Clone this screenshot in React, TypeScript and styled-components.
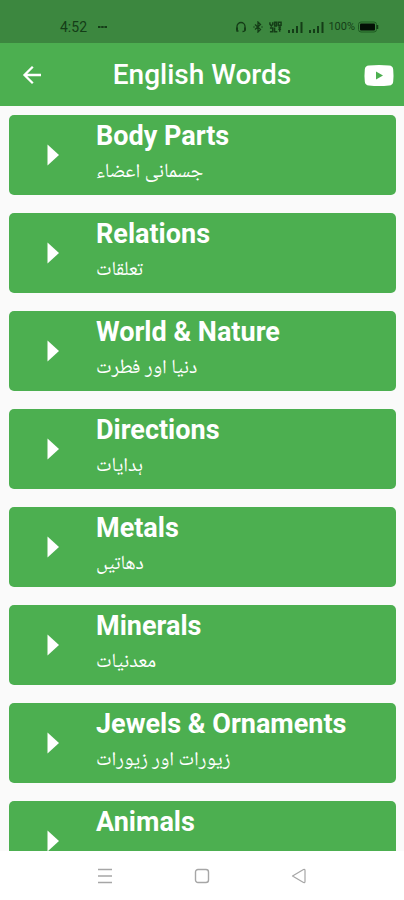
import React from 'react';
import styled, { createGlobalStyle } from 'styled-components';

const GlobalStyle = createGlobalStyle`
  * { box-sizing: border-box; }
  body { margin: 0; background: #fafafa; font-family: Roboto, "DejaVu Sans", sans-serif; }
`;

const Screen = styled.div`
  display: flex;
  flex-direction: column;
  height: 100vh;
  overflow: hidden;
`;

const StatusBar = styled.div`
  display: flex;
  flex: none;
  align-items: center;
  justify-content: space-between;
  height: 43px;
  padding: 10px 25px 0 60px;
  background: #3c873f;
  color: #143d17;
`;

const Clock = styled.div`
  display: flex;
  align-items: center;
  gap: 11px;
  font-size: 14px;
`;

const StatusIcons = styled.div`
  display: flex;
  align-items: center;
  gap: 4px;
`;

const Indicators = styled.div`
  display: flex;
  align-items: center;
  gap: 6px;
`;

const Battery = styled.div`
  display: flex;
  align-items: center;
  gap: 3px;
  font-size: 11px;
`;

const AppBar = styled.header`
  display: flex;
  flex: none;
  align-items: center;
  height: 63px;
  padding: 0 10px 0 16px;
  background: #4caf50;
  color: #fff;
`;

const IconButton = styled.button`
  display: flex;
  align-items: center;
  justify-content: center;
  padding: 0;
  border: 0;
  background: none;
  color: inherit;
  cursor: pointer;
`;

const Title = styled.h1`
  flex: 1;
  margin: 0;
  padding-right: 8px;
  text-align: center;
  font-size: 28px;
  line-height: 32px;
  font-weight: 500;
`;

const List = styled.main`
  display: flex;
  flex: 1;
  flex-direction: column;
  gap: 18px;
  min-height: 0;
  padding: 9px 8px 0 9px;
  overflow-y: auto;
  scrollbar-width: none;
`;

const Card = styled.button`
  display: flex;
  flex: none;
  height: 80px;
  padding: 0;
  border: 0;
  border-radius: 5px;
  background: #4caf50;
  color: #fff;
  font-family: inherit;
  text-align: left;
  cursor: pointer;
`;

const ArrowSlot = styled.span`
  display: flex;
  align-self: stretch;
  align-items: center;
  justify-content: center;
  width: 87px;
`;

const Labels = styled.span`
  display: flex;
  flex-direction: column;
  align-items: flex-start;
  gap: 6px;
  padding-top: 5px;
`;

const English = styled.span`
  font-size: 27px;
  line-height: 32px;
  font-weight: 700;
`;

const Urdu = styled.span`
  font-family: "Noto Naskh Arabic UI", "Noto Naskh Arabic", "DejaVu Sans", sans-serif;
  font-size: 20px;
  line-height: 30px;
`;

const NavBar = styled.nav`
  display: flex;
  flex: none;
  align-items: center;
  justify-content: space-evenly;
  height: 49px;
  padding: 0 16px;
  background: #fff;
  color: #a6a6a6;
`;

const topics: { english: string; urdu?: string }[] = [
  { english: 'Body Parts', urdu: 'جسمانی اعضاء' },
  { english: 'Relations', urdu: 'تعلقات' },
  { english: 'World & Nature', urdu: 'دنیا اور فطرت' },
  { english: 'Directions', urdu: 'ہدایات' },
  { english: 'Metals', urdu: 'دھاتیں' },
  { english: 'Minerals', urdu: 'معدنیات' },
  { english: 'Jewels & Ornaments', urdu: 'زیورات اور زیورات' },
  { english: 'Animals' },
];

const Headset = () => (
  <svg width="12" height="12" viewBox="0 0 12 12" fill="none" stroke="currentColor" strokeWidth="1.3">
    <path d="M3.500 10H2V5.500a4 4 0 0 1 8 0V9q0 1.500-2.500 1.500" />
    <path d="M2 6.500v3M10 6.500v3" strokeWidth="2" />
  </svg>
);

const Bluetooth = () => (
  <svg width="10" height="12" viewBox="0 0 10 12" fill="none" stroke="currentColor" strokeWidth="1.300">
    <path d="M2 3.500 7.500 8.500 5 11V1l2.500 2.500L2 8.500M.5 6h1M8.500 6h1" />
  </svg>
);

const VoLte = () => (
  <svg width="13" height="12" viewBox="0 0 14 12" fill="none" stroke="currentColor" strokeWidth="1.600">
    <path d="M1 1v2l1.500 2L4 3V1M6 1h2v4H6zM1 7h3v4H1M6 6.500V11h3M10 1h3v3h-3zM10 6h3M11.500 6v5M10 8.500h3" />
  </svg>
);

const Signal = () => (
  <svg width="15" height="12" viewBox="0 0 15 12" fill="currentColor">
    <path d="M0 9h2v3H0zM4 8h2v4H4zM8 5h2v7H8zM12.500 1h2v11h-2z" />
  </svg>
);

const BatteryIcon = () => (
  <svg width="21" height="12" viewBox="0 0 21 12">
    <rect x=".5" y="1" width="18" height="10" rx="2.500" fill="none" stroke="#1d5a21" />
    <rect x="2" y="2.500" width="15" height="7" rx="1" fill="#031005" />
    <path d="M19.500 4v4" stroke="#143d17" strokeWidth="1.500" />
  </svg>
);

const BackArrow = () => (
  <svg width="32" height="32" viewBox="0 0 32 32" fill="none" stroke="currentColor" strokeWidth="2.300">
    <path d="M25 16H8.500M16.800 7.800 8.500 16l8.300 8.200" />
  </svg>
);

const Video = () => (
  <svg width="30" height="24" viewBox="0 0 30 24">
    <path fill="#fff" d="M5 2.500Q15 1.500 25 2.500q4 .3 4.200 4 .6 6 0 12-.2 3.700-4.200 4-10 1-20 0-4-.3-4.200-4-.6-6 0-12 .2-3.700 4.200-4Z" />
    <path fill="#4caf50" d="m12 8.500 7 4-7 4z" />
  </svg>
);

const Triangle = () => (
  <svg width="12" height="22" viewBox="0 0 12 22" fill="currentColor">
    <path d="M0.500 0.500 12 11 0.500 21.500z" />
  </svg>
);

export default function App() {
  return (
    <>
      <GlobalStyle />
      <Screen>
        <StatusBar>
          <Clock>
            <span>4:52</span>
            <svg width="9" height="2" viewBox="0 0 9 2" fill="currentColor">
              <path d="M0 0h2.500v2H0zM3.200 0h2.500v2H3.200zM6.400 0H9v2H6.400z" />
            </svg>
          </Clock>
          <StatusIcons>
            <Indicators>
              <Headset />
              <Bluetooth />
              <VoLte />
              <Signal />
              <Signal />
            </Indicators>
            <Battery>
              <span>100%</span>
              <BatteryIcon />
            </Battery>
          </StatusIcons>
        </StatusBar>
        <AppBar>
          <IconButton aria-label="Back"><BackArrow /></IconButton>
          <Title>English Words</Title>
          <IconButton aria-label="Watch videos"><Video /></IconButton>
        </AppBar>
        <List>
          {topics.map((topic) => (
            <Card key={topic.english}>
              <ArrowSlot><Triangle /></ArrowSlot>
              <Labels>
                <English>{topic.english}</English>
                {topic.urdu && <Urdu lang="ur" dir="rtl">{topic.urdu}</Urdu>}
              </Labels>
            </Card>
          ))}
        </List>
        <NavBar>
          <IconButton aria-label="Recent apps">
            <svg width="16" height="16" viewBox="0 0 16 16" fill="none" stroke="currentColor" strokeWidth="1.400">
              <path d="M1 1.500h14M1 8h14M1 14.500h14" />
            </svg>
          </IconButton>
          <IconButton aria-label="Home">
            <svg width="16" height="16" viewBox="0 0 16 16" fill="none" stroke="currentColor" strokeWidth="1.400">
              <rect x="1.500" y="1.500" width="13" height="13" rx="2.500" />
            </svg>
          </IconButton>
          <IconButton aria-label="Go back">
            <svg width="16" height="16" viewBox="0 0 16 16" fill="none" stroke="currentColor" strokeWidth="1.200" strokeLinejoin="round">
              <path d="M1.500 8 12.500 1.500q1.500-.5 1.500 1v11q0 1.500-1.500 1z" />
            </svg>
          </IconButton>
        </NavBar>
      </Screen>
    </>
  );
}
